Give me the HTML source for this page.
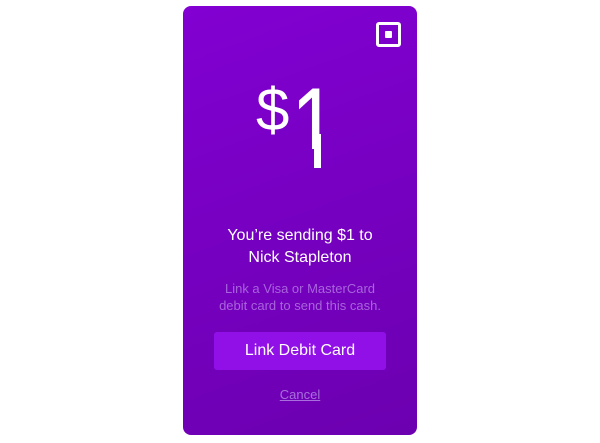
<!DOCTYPE html>
<html><head><meta charset="utf-8"><style>
html,body{margin:0;padding:0;background:#fff;width:600px;height:443px;overflow:hidden;font-family:"Liberation Sans",sans-serif}
.card{position:absolute;left:183px;top:6px;width:234px;height:429px;border-radius:8px;background:linear-gradient(160deg,#8200d2 0%,#7400bd 60%,#6c00b0 100%)}
.logo{position:absolute;left:193px;top:16px;width:19px;height:19px;border:3px solid #fff;border-radius:3px}
.logo:after{content:"";position:absolute;left:6px;top:6px;width:7px;height:7px;background:#fff;border-radius:1px}
.t{position:absolute;left:0;width:234px;text-align:center;color:#fff}
.dollar{position:absolute;left:73px;top:74px;font-size:60px;color:#fff;line-height:1}
.one{position:absolute;left:108px;top:66px;font-size:107px;color:#fff;line-height:1;transform:scaleX(0.78);transform-origin:left;clip-path:inset(0 0 30px 0)}
.stem{position:absolute;left:131px;top:128px;width:7px;height:34px;background:#fff}
.btn{position:absolute;left:31px;top:326px;width:172px;height:38px;background:#9110e8;border-radius:3px;color:#fff;font-size:16px;text-align:center;line-height:38px}
</style></head><body>
<div class="card">
<div class="logo"></div>
<div class="dollar">$</div>
<div class="one">1</div>
<div class="stem"></div>
<div class="t" style="top:219px;font-size:16px;line-height:22px">You’re sending $1 to<br>Nick Stapleton</div>
<div class="t" style="top:274px;font-size:13px;line-height:17px;color:#a963dd">Link a Visa or MasterCard<br>debit card to send this cash.</div>
<div class="btn">Link Debit Card</div>
<div class="t" style="top:381px;font-size:13px;color:#a870dc;text-decoration:underline">Cancel</div>
</div>
</body></html>
